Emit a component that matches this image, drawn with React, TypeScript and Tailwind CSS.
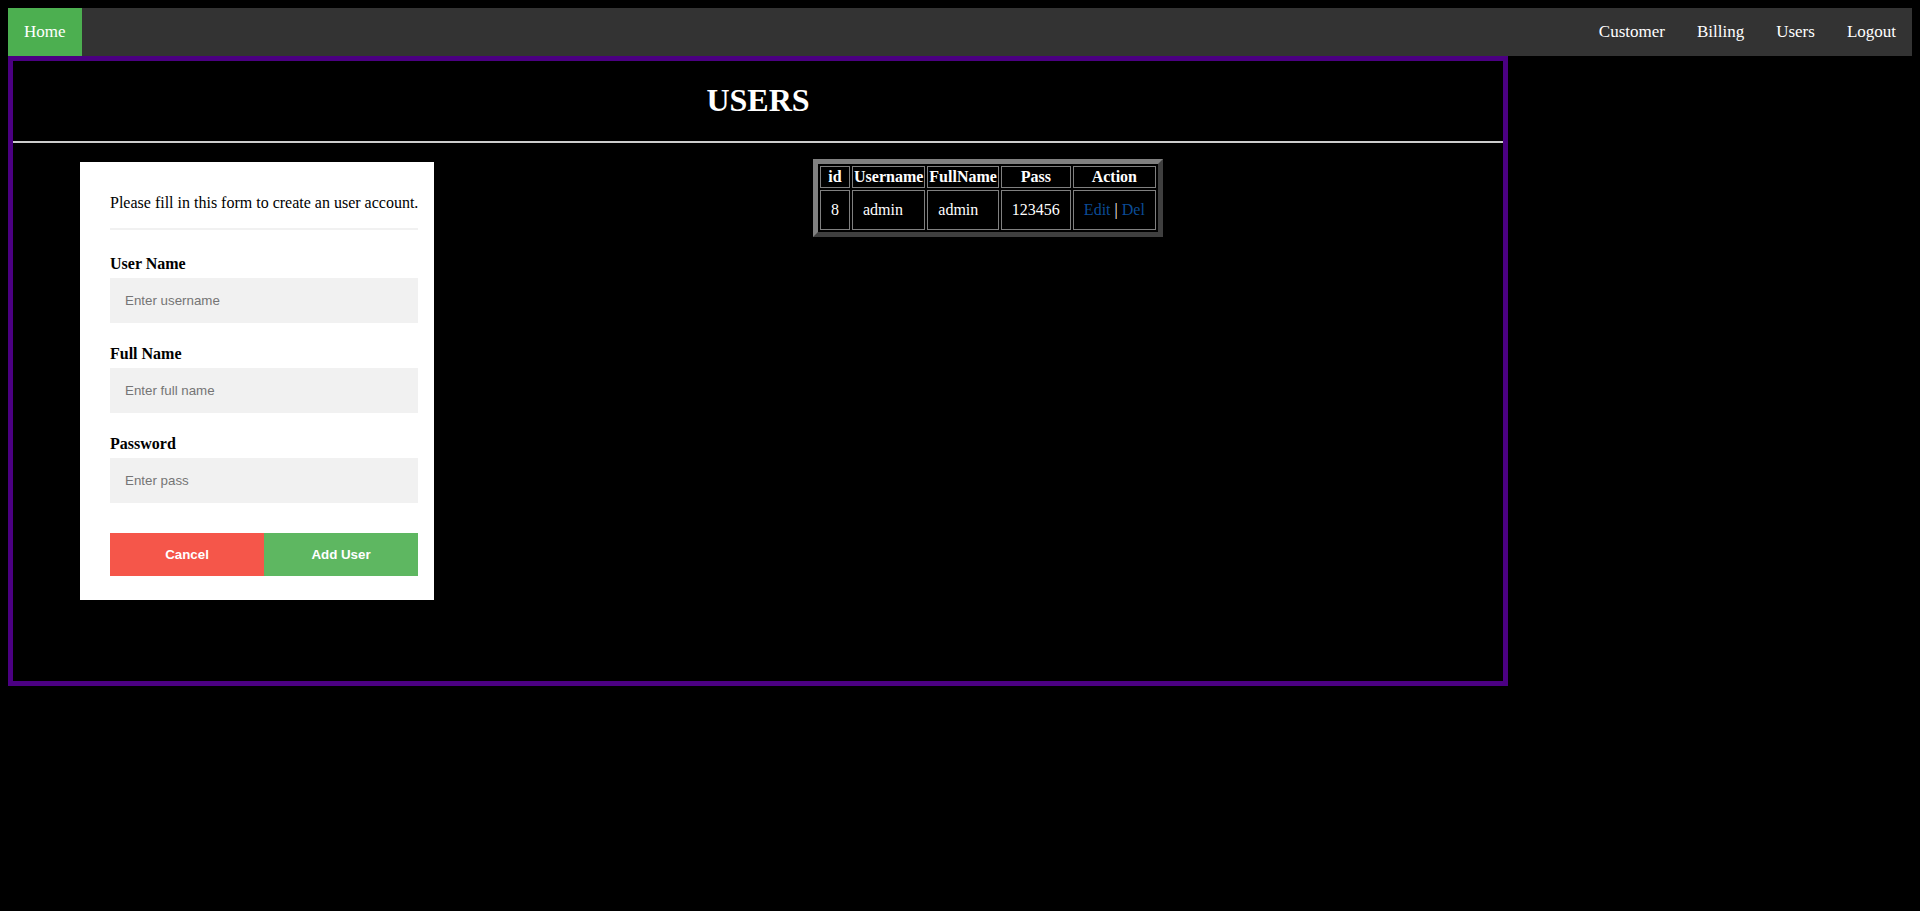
import React from "react";

const navRight = ["Customer", "Billing", "Users", "Logout"];

const fields = [
  { label: "User Name", placeholder: "Enter username", type: "text" },
  { label: "Full Name", placeholder: "Enter full name", type: "text" },
  { label: "Password", placeholder: "Enter pass", type: "password" },
];

const users = [{ id: 8, username: "admin", fullname: "admin", pass: "123456" }];

function UserForm() {
  return (
    <div className="ml-[67px] mt-[19px] w-[354px] shrink-0 bg-white pt-4 pb-4 pl-[30px] pr-4 text-black">
      <p className="my-4 text-[16px] leading-[18px] whitespace-nowrap">
        Please fill in this form to create an user account.
      </p>
      <div className="mb-[25px] border-t-2 border-[#f1f1f1]" />
      {fields.map((f) => (
        <div key={f.label} className="pb-[22px]">
          <div className="h-[18px] text-[16px] leading-[18px] font-bold">{f.label}</div>
          <input
            type={f.type}
            placeholder={f.placeholder}
            className="mt-[5px] block h-[45px] w-full bg-[#f1f1f1] px-[15px] font-['Liberation_Sans',Arial,sans-serif] text-[13.333px] text-black outline-none placeholder:text-[#757575]"
          />
        </div>
      ))}
      <div className="mt-2 mb-2 flex">
        <button className="h-[43px] w-1/2 bg-[#f5564a] font-['Liberation_Sans',Arial,sans-serif] text-[13.333px] font-bold text-white">
          Cancel
        </button>
        <button className="h-[43px] w-1/2 bg-[#5eb761] font-['Liberation_Sans',Arial,sans-serif] text-[13.333px] font-bold text-white">
          Add User
        </button>
      </div>
    </div>
  );
}

function UserTable() {
  const th = "border border-[#808080] px-[1px] py-[1px] font-bold leading-[18px]";
  const td = "border border-[#808080] p-[10px] text-left leading-[18px]";
  return (
    <table className="mt-4 ml-[379px] h-fit border-separate border-spacing-[2px] border-[5px] border-t-[#808080] border-l-[#808080] border-r-[#3f3f3f] border-b-[#3f3f3f] text-[16px] text-white">
      <thead>
        <tr>
          <th className={th}>id</th>
          <th className={th}>Username</th>
          <th className={th}>FullName</th>
          <th className={th}>Pass</th>
          <th className={th}>Action</th>
        </tr>
      </thead>
      <tbody>
        {users.map((u) => (
          <tr key={u.id}>
            <td className={td}>{u.id}</td>
            <td className={td}>{u.username}</td>
            <td className={td}>{u.fullname}</td>
            <td className={td}>{u.pass}</td>
            <td className={`${td} whitespace-nowrap`}>
              <a href="#" className="text-[#0b4c96]">Edit</a> | <a href="#" className="text-[#0b4c96]">Del</a>
            </td>
          </tr>
        ))}
      </tbody>
    </table>
  );
}

export default function App() {
  return (
    <div className="min-h-[911px] bg-black p-2 font-['Liberation_Serif','Times_New_Roman',serif] text-white">
      <nav className="flex h-12 bg-[#333333] text-[17px] leading-5">
        <a href="#" className="bg-[#4caf50] px-4 py-[14px] text-white">Home</a>
        <div className="ml-auto flex">
          {navRight.map((item) => (
            <a key={item} href="#" className="px-4 py-[14px] text-white">
              {item}
            </a>
          ))}
        </div>
      </nav>
      <div className="box-border h-[630px] w-[1500px] border-[5px] border-[#4b0082]">
        <h1 className="mt-[21px] mb-[22px] text-center text-[32px] leading-[37px] font-bold">USERS</h1>
        <div className="border-t-2 border-[#cccccc]" />
        <div className="flex items-start">
          <UserForm />
          <UserTable />
        </div>
      </div>
    </div>
  );
}
